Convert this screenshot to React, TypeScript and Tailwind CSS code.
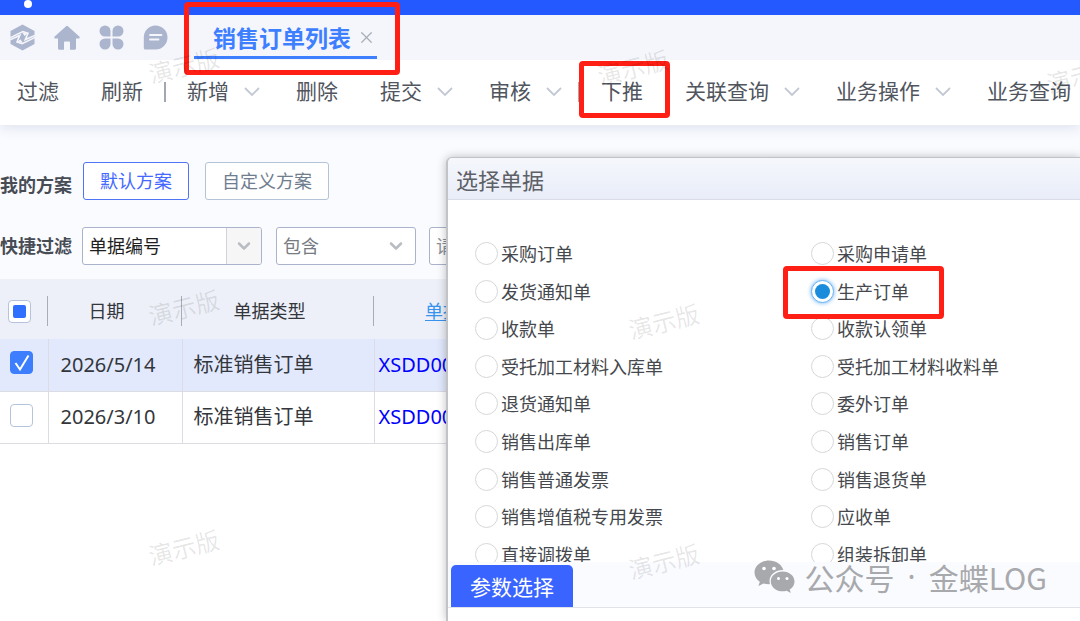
import React, { useState } from "react";
import { ChevronDown, X } from "lucide-react";

type MenuItem = { label: string; dropdown?: boolean; marked?: boolean; divider?: boolean };

const MENU: MenuItem[] = [
  { label: "过滤" },
  { label: "刷新", divider: true },
  { label: "新增", dropdown: true },
  { label: "删除" },
  { label: "提交", dropdown: true },
  { label: "审核", dropdown: true, divider: true },
  { label: "下推", marked: true },
  { label: "关联查询", dropdown: true },
  { label: "业务操作", dropdown: true },
  { label: "业务查询", dropdown: true },
];

const BILL_TYPES = [
  "采购订单",
  "采购申请单",
  "发货通知单",
  "生产订单",
  "收款单",
  "收款认领单",
  "受托加工材料入库单",
  "受托加工材料收料单",
  "退货通知单",
  "委外订单",
  "销售出库单",
  "销售订单",
  "销售普通发票",
  "销售退货单",
  "销售增值税专用发票",
  "应收单",
  "直接调拨单",
  "组装拆卸单",
];

const ORDERS = [
  { date: "2026/5/14", type: "标准销售订单", no: "XSDD000182" },
  { date: "2026/3/10", type: "标准销售订单", no: "XSDD000181" },
];

const WATERMARKS = [
  "left-[148px] top-[48px]",
  "left-[597px] top-[50px]",
  "left-[1046px] top-[58px]",
  "left-[148px] top-[290px]",
  "left-[628px] top-[304px]",
  "left-[148px] top-[530px]",
  "left-[628px] top-[544px]",
];

const Marker: React.FC<{ className: string }> = ({ className }) => (
  <span
    className={`pointer-events-none absolute z-10 rounded-[4px] border-[5px] border-[#ff1f14] ${className}`}
  ></span>
);

const NavIcons: React.FC = () => (
  <nav className="flex items-center gap-[19px] text-[#abb5ce]">
    <a href="#cloud" aria-label="金蝶云">
      <svg width="25" height="27" viewBox="0 0 25 27" fill="currentColor">
        <path d="M12.5 0.5 24.500 7V20L12.500 26.500 0.500 20V7Z" />
        <g fill="none" stroke="#f5f6fb" strokeWidth="1.600">
          <path d="M0 13.800 12.800 7.600 18 9.200 15.200 15.600 25 11.400" />
          <path d="M25 13.400 12.200 19.600 7 18 9.800 11.400 0 15.800" />
        </g>
        <path d="M12 8.200 17.500 9.400 14.600 12ZM13 19 7.500 17.800 10.400 15.200Z" fill="#f5f6fb" />
      </svg>
    </a>
    <a href="#home" aria-label="首页">
      <svg width="26" height="26" viewBox="0 0 26 26" fill="currentColor">
        <path d="M11.8 1.4a1.8 1.8 0 0 1 2.4 0L25.3 11.6c.8.8.3 1.9-.8 1.9H22v9.8c0 .9-.6 1.5-1.5 1.5H16v-7.3c0-.7-.4-1.1-1.1-1.1h-3.8c-.7 0-1.1.4-1.1 1.1v7.3H5.5c-.9 0-1.5-.6-1.5-1.5v-9.8H1.5c-1.1 0-1.6-1.1-.8-1.9Z" />
      </svg>
    </a>
    <a href="#apps" aria-label="应用">
      <svg width="25" height="25" viewBox="0 0 25 25" fill="currentColor">
        <path d="M6 0.5a5.5 5.5 0 0 1 5.5 5.5v5.5H6A5.5 5.5 0 0 1 6 0.5Z" />
        <path d="M19 0.5a5.5 5.5 0 0 1 0 11h-5.5V6A5.5 5.5 0 0 1 19 0.5Z" />
        <path d="M6 13.5h5.5V19A5.5 5.5 0 1 1 6 13.5Z" />
        <path d="M13.5 13.5H19A5.5 5.5 0 1 1 13.5 19Z" />
      </svg>
    </a>
    <a href="#message" aria-label="消息">
      <svg width="25" height="25" viewBox="0 0 25 25">
        <path
          d="M12.5 0.5a12 12 0 0 1 0 24H2.3c-.9 0-1.5-.6-1.5-1.5V12.5A12 12 0 0 1 12.5 0.5Z"
          fill="currentColor"
        />
        <path d="M7 10h11.5M7 14.5h8.5" stroke="#f5f6fb" strokeWidth="1.8" strokeLinecap="round" />
      </svg>
    </a>
  </nav>
);

const Toolbar: React.FC = () => (
  <div className="relative flex h-[65px] items-center bg-white pb-[2px] pl-[17px] text-[21px] whitespace-nowrap text-[#50555e] shadow-[0_3px_12px_rgba(60,80,140,0.14)]">
    {MENU.map((item) => (
      <React.Fragment key={item.label}>
        <button
          type="button"
          className={`relative flex shrink-0 items-center gap-[15px] ${
            item.divider ? (item.dropdown ? "mr-4" : "mr-[21px]") : item.dropdown ? "mr-9" : "mr-[42px]"
          }`}
        >
          {item.label}
          {item.dropdown && (
            <svg width="16" height="9" viewBox="0 0 16 9" fill="none" stroke="#c3c8d4" strokeWidth="1.8">
              <path d="M1 1 8 8 15 1" />
            </svg>
          )}
          {item.marked && <Marker className="-top-[15px] -right-[27px] -bottom-[11px] -left-[22px]" />}
        </button>
        {item.divider && <span className="mr-[21px] h-5 w-[2px] shrink-0 bg-[#a3a7af]"></span>}
      </React.Fragment>
    ))}
  </div>
);

const FilterArea: React.FC = () => (
  <div className="flex flex-col gap-[27px] pt-[37px] pb-[14px] text-lg">
    <div className="flex items-center">
      <span className="w-[83px] shrink-0 pt-2 font-bold text-[#474c55]">我的方案</span>
      <button
        type="button"
        className="h-[38px] rounded-[3px] border border-[#4f74f5] bg-white px-4 text-[#4468ff]"
      >
        默认方案
      </button>
      <button
        type="button"
        className="ml-4 h-[38px] rounded-[3px] border border-[#b4c4d6] bg-white px-4 text-[#6f7d8f]"
      >
        自定义方案
      </button>
    </div>

    <div className="flex items-center">
      <label htmlFor="filter-field" className="w-[82px] shrink-0 font-bold text-[#474c55]">
        快捷过滤
      </label>
      <div className="flex h-[38px] w-[180px] overflow-hidden rounded-[3px] border border-[#aab3cb] bg-white">
        <select id="filter-field" className="min-w-0 flex-1 appearance-none pl-[6px] text-[#1f1f1f] outline-none">
          <option>单据编号</option>
          <option>日期</option>
        </select>
        <span className="flex w-[35px] items-center justify-center border-l border-[#cfd2da] bg-[#f6f6f6]">
          <ChevronDown size={20} strokeWidth={3} className="text-[#b9bcc2]" />
        </span>
      </div>
      <div className="ml-[14px] flex h-[38px] w-[140px] items-center overflow-hidden rounded-[3px] border border-[#aab3cb] bg-white pr-[9px]">
        <select aria-label="条件" className="min-w-0 flex-1 appearance-none pl-[6px] text-[#777b82] outline-none">
          <option>包含</option>
          <option>等于</option>
        </select>
        <ChevronDown size={20} strokeWidth={3} className="text-[#b9bcc2]" />
      </div>
      <input
        type="text"
        aria-label="关键字"
        placeholder="请输入关键字"
        className="ml-[13px] h-[38px] w-[200px] rounded-[3px] border border-[#aab3cb] bg-white px-[6px] placeholder:text-[#8c9097]"
      />
    </div>
  </div>
);

const OrderTable: React.FC = () => {
  const [selected, setSelected] = useState<number[]>([0]);

  const toggle = (index: number) =>
    setSelected((prev) => (prev.includes(index) ? prev.filter((i) => i !== index) : [...prev, index]));

  const toggleAll = () => setSelected((prev) => (prev.length ? [] : ORDERS.map((_, i) => i)));

  return (
    <table className="w-full table-fixed border-collapse text-[#33363b]">
      <colgroup>
        <col className="w-[48px]" />
        <col className="w-[134px]" />
        <col className="w-[192px]" />
        <col className="w-[190px]" />
        <col />
      </colgroup>
      <thead>
        <tr className="h-[60px] bg-[#edf0f8] text-lg">
          <th className="p-0 pt-1">
            <span className="grid h-[30px] items-center border-r border-[#a9acb4] pl-2">
              <input
                type="checkbox"
                aria-label="全选"
                checked={selected.length > 0}
                onChange={toggleAll}
                className="col-start-1 row-start-1 size-[23px] appearance-none rounded-[4px] border border-[#b5c3dc] bg-white"
              />
              {selected.length > 0 && (
                <span className="pointer-events-none col-start-1 row-start-1 ml-[5px] size-[13px] rounded-[2px] bg-[#2f6fff]"></span>
              )}
            </span>
          </th>
          <th className="p-0 pt-1 font-normal">
            <span className="block h-[30px] border-r border-[#a9acb4] pr-4 leading-[30px]">日期</span>
          </th>
          <th className="p-0 pt-1 font-normal">
            <span className="block h-[30px] border-r border-[#a9acb4] pr-4 leading-[30px]">单据类型</span>
          </th>
          <th className="p-0 pt-1 pr-4 font-normal">
            <a href="#bill-no" className="text-[#3793ee] underline underline-offset-2">
              单据编号
            </a>
          </th>
          <th></th>
        </tr>
      </thead>
      <tbody>
        {ORDERS.map((order, index) => {
          const checked = selected.includes(index);
          return (
            <tr
              key={order.no}
              className={`h-[52px] border-b border-[#dcdde2] text-xl ${checked ? "bg-[#e2e9fd]" : "bg-white"}`}
            >
              <td className="border-r border-[#dcdde2] p-0">
                <span className="grid items-center pb-1 pl-[10px]">
                  <input
                    type="checkbox"
                    aria-label={order.date}
                    checked={checked}
                    onChange={() => toggle(index)}
                    className="col-start-1 row-start-1 size-[23px] appearance-none rounded-[4px] border border-[#b5c3dc] bg-white checked:border-[#3d7eff] checked:bg-[#3d7eff]"
                  />
                  {checked && (
                    <svg
                      width="23"
                      height="23"
                      viewBox="0 0 23 23"
                      fill="none"
                      stroke="white"
                      strokeWidth="2"
                      className="pointer-events-none col-start-1 row-start-1"
                    >
                      <path d="M5.5 12 10 18.5 18.5 4.5" />
                    </svg>
                  )}
                </span>
              </td>
              <td className="border-r border-[#dcdde2] p-0 pl-3">{order.date}</td>
              <td className="border-r border-[#dcdde2] p-0 pl-[11px]">{order.type}</td>
              <td className="border-r border-[#dcdde2] p-0 pl-1">
                <a href="#order" className="text-[#0000ff]">
                  {order.no}
                </a>
              </td>
              <td></td>
            </tr>
          );
        })}
      </tbody>
    </table>
  );
};

const BillDialog: React.FC = () => {
  const [bill, setBill] = useState("生产订单");

  return (
    <section
      role="dialog"
      aria-labelledby="dialog-title"
      className="absolute top-[157px] right-0 bottom-0 left-[446px] rounded-tl-[6px] border-t border-l-2 border-[#c2c3c6] bg-white shadow-[0_0_10px_rgba(0,0,0,0.25)]"
    >
      <h2
        id="dialog-title"
        className="h-[42px] rounded-tl-[5px] border-b border-[#dadde6] bg-linear-to-b from-[#f5f7fc] to-[#e9edf8] pl-2 text-[22px] leading-[44px] text-[#5d6066]"
      >
        选择单据
      </h2>

      <div className="h-[362px] overflow-hidden pt-[35px] pl-[27px]">
        <div className="grid h-[338px] grid-cols-[336px_1fr] grid-rows-9">
          {BILL_TYPES.map((name) => (
            <label key={name} className="relative flex items-center gap-[3px] text-lg text-[#45484d]">
              <span className="grid place-items-center">
                <input
                  type="radio"
                  name="bill"
                  checked={bill === name}
                  onChange={() => setBill(name)}
                  className="peer col-start-1 row-start-1 size-[23px] appearance-none rounded-full border border-[#d6d7d9] bg-white checked:border-[#6bb3f3] checked:shadow-[0_0_4px_#6bb3f3]"
                />
                <span className="col-start-1 row-start-1 size-[15px] rounded-full peer-checked:bg-[#1a8cdb]"></span>
              </span>
              <span className="pt-px">{name}</span>
              {name === "生产订单" && <Marker className="-top-[7px] -left-[28px] h-[53px] w-[161px]" />}
            </label>
          ))}
        </div>
      </div>

      <div className="flex h-[46px] items-end border-b border-[#dfe2ea] bg-[#fafbff] pl-[3px]">
        <button type="button" className="h-[42px] rounded-t-[5px] bg-[#3a64ff] px-[19px] pt-1 text-[21px] text-white">
          参数选择
        </button>
      </div>
    </section>
  );
};

const App: React.FC = () => (
  <main className="relative min-h-screen overflow-hidden bg-white font-['Noto_Sans','Noto_Sans_CJK_SC',sans-serif]">
    <div className="flex h-[15px] bg-[#2459ff] pl-6">
      <span className="size-2 rounded-full bg-white"></span>
    </div>

    <header className="relative z-10 flex h-[45px] items-center bg-[#f5f6fb] pl-[10px]">
      <NavIcons />
      <div className="relative ml-[26px] flex h-[44px] items-center gap-[6px] self-start border-b-[3px] border-[#3d7fff] pr-px pl-[19px]">
        <a href="#orders" className="pt-1 text-[23px] leading-8 font-bold text-[#3d7fff]">
          销售订单列表
        </a>
        <button type="button" aria-label="关闭" className="pt-1">
          <X size={19} strokeWidth={1.5} className="text-[#a9adb8]" />
        </button>
        <Marker className="-top-[13px] -right-[23px] -bottom-[19px] -left-[10px]" />
      </div>
    </header>

    <Toolbar />

    <div className="bg-[#fafbff]">
      <FilterArea />
    </div>
    <OrderTable />

    <BillDialog />

    <div className="pointer-events-none absolute right-[33px] bottom-[26px] flex items-center gap-[9px] text-[#a8a9ac]">
      <svg width="42" height="34" viewBox="0 0 42 34" fill="currentColor">
        <path d="M15 0.5C7 0.5 0.5 5.8 0.5 12.5c0 3.8 2.1 7.1 5.3 9.3L4.5 26l5-2.6c1.7.5 3.5.8 5.500.8l1-.1c-.3-1-.5-2-.5-3C15.5 14.8 21.5 10 28.7 10h.6C27.8 4.5 22 0.5 15 0.5Z" />
        <path d="M28.7 11.500c-6.600 0-11.900 4.400-11.900 9.900s5.300 9.900 11.900 9.900c1.400 0 2.800-.2 4-.6l4.100 2.300-1.100-3.500c2.900-1.800 4.800-4.700 4.800-8.100 0-5.500-5.200-9.900-11.800-9.900Z" />
        <g fill="white">
          <circle cx="10" cy="8.5" r="1.8" />
          <circle cx="20" cy="8.5" r="1.8" />
          <circle cx="24.5" cy="18.5" r="1.5" />
          <circle cx="33" cy="18.5" r="1.5" />
        </g>
      </svg>
      <p className="flex gap-[13px] font-['Noto_Sans_CJK_SC',sans-serif] text-[30px] leading-9">
        <span>公众号</span>
        <span className="font-['Noto_Sans',sans-serif]">·</span>
        <span>金蝶LOG</span>
      </p>
    </div>

    {WATERMARKS.map((place) => (
      <span
        key={place}
        className={`pointer-events-none absolute z-20 -rotate-[14deg] text-2xl leading-9 whitespace-nowrap text-black/10 ${place}`}
      >
        演示版
      </span>
    ))}
  </main>
);

export default App;
